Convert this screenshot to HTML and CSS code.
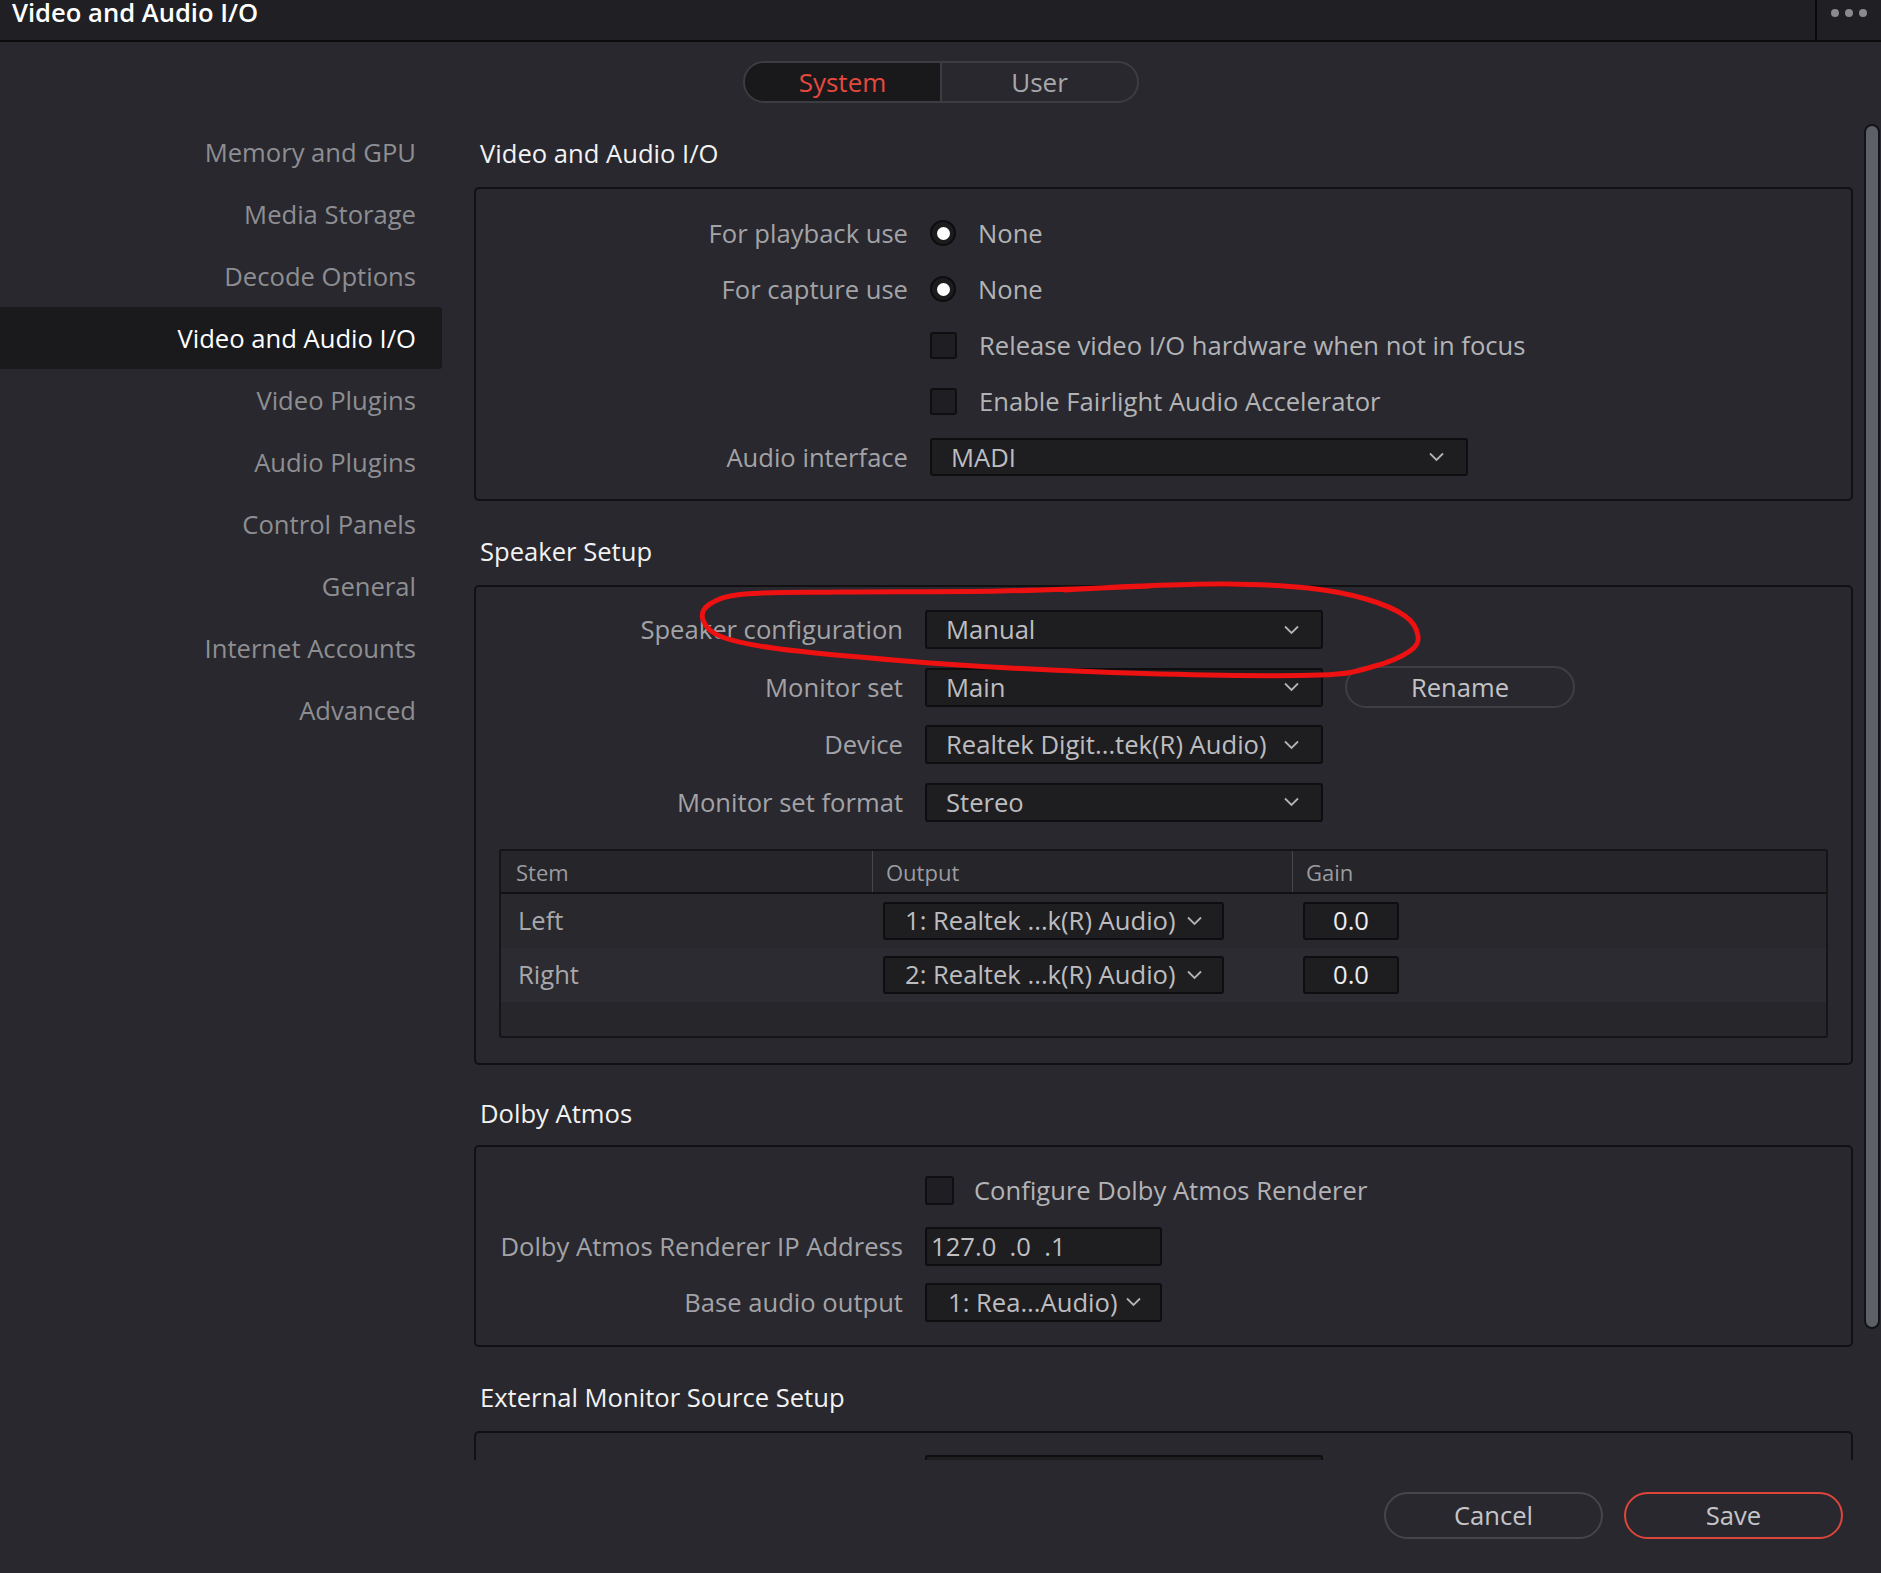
FILE: index.html
```html
<!DOCTYPE html>
<html>
<head>
<meta charset="utf-8">
<title>Video and Audio I/O</title>
<link rel="stylesheet" href="styles.css">
</head>
<body>
<header class="titlebar">
  <div class="title">Video and Audio I/O</div>
  <div class="menu"><span class="dot"></span><span class="dot"></span><span class="dot"></span></div>
</header>

<div class="seg-wrap">
  <div class="seg">
    <div class="seg-item active">System</div>
    <div class="seg-item">User</div>
  </div>
</div>

<div class="layout">
  <nav class="sidebar">
    <div class="nav-item">Memory and GPU</div>
    <div class="nav-item">Media Storage</div>
    <div class="nav-item">Decode Options</div>
    <div class="nav-item active">Video and Audio I/O</div>
    <div class="nav-item">Video Plugins</div>
    <div class="nav-item">Audio Plugins</div>
    <div class="nav-item">Control Panels</div>
    <div class="nav-item">General</div>
    <div class="nav-item">Internet Accounts</div>
    <div class="nav-item">Advanced</div>
  </nav>

  <div class="content">
    <div class="scroll">
      <div class="section-title">Video and Audio I/O</div>
      <div class="box box1">
        <div class="row">
          <div class="lbl">For playback use</div>
          <span class="radio"></span><span class="opt-text">None</span>
        </div>
        <div class="row">
          <div class="lbl">For capture use</div>
          <span class="radio"></span><span class="opt-text">None</span>
        </div>
        <div class="row">
          <div class="lbl"></div>
          <span class="check"></span><span class="opt-text">Release video I/O hardware when not in focus</span>
        </div>
        <div class="row">
          <div class="lbl"></div>
          <span class="check"></span><span class="opt-text">Enable Fairlight Audio Accelerator</span>
        </div>
        <div class="row">
          <div class="lbl">Audio interface</div>
          <div class="select sel-wide"><span>MADI</span><svg class="chev" width="15" height="10" viewBox="0 0 15 10"><polyline points="1,1.5 7.5,8 14,1.5"/></svg></div>
        </div>
      </div>

      <div class="section-title">Speaker Setup</div>
      <div class="box box2 f2">
        <div class="row r39">
          <div class="lbl">Speaker configuration</div>
          <div class="select sel-mid"><span>Manual</span><svg class="chev" width="15" height="10" viewBox="0 0 15 10"><polyline points="1,1.5 7.5,8 14,1.5"/></svg></div>
        </div>
        <div class="row r39">
          <div class="lbl">Monitor set</div>
          <div class="select sel-mid"><span>Main</span><svg class="chev" width="15" height="10" viewBox="0 0 15 10"><polyline points="1,1.5 7.5,8 14,1.5"/></svg></div>
          <div class="pill rename">Rename</div>
        </div>
        <div class="row r39">
          <div class="lbl">Device</div>
          <div class="select sel-mid"><span>Realtek Digit...tek(R) Audio)</span><svg class="chev" width="15" height="10" viewBox="0 0 15 10"><polyline points="1,1.5 7.5,8 14,1.5"/></svg></div>
        </div>
        <div class="row r39">
          <div class="lbl">Monitor set format</div>
          <div class="select sel-mid"><span>Stereo</span><svg class="chev" width="15" height="10" viewBox="0 0 15 10"><polyline points="1,1.5 7.5,8 14,1.5"/></svg></div>
        </div>

        <div class="table">
          <div class="thead">
            <div class="th">Stem</div>
            <div class="th th-div">Output</div>
            <div class="th th-div">Gain</div>
          </div>
          <div class="tr tr-a">
            <div class="td td-name">Left</div>
            <div class="td"><div class="select sel-out"><span>1: Realtek ...k(R) Audio)</span><svg class="chev" width="15" height="10" viewBox="0 0 15 10"><polyline points="1,1.5 7.5,8 14,1.5"/></svg></div></div>
            <div class="td"><div class="gain">0.0</div></div>
          </div>
          <div class="tr tr-b">
            <div class="td td-name">Right</div>
            <div class="td"><div class="select sel-out"><span>2: Realtek ...k(R) Audio)</span><svg class="chev" width="15" height="10" viewBox="0 0 15 10"><polyline points="1,1.5 7.5,8 14,1.5"/></svg></div></div>
            <div class="td"><div class="gain">0.0</div></div>
          </div>
        </div>
      </div>

      <div class="section-title">Dolby Atmos</div>
      <div class="box box3 f2">
        <div class="row r39 g17">
          <div class="lbl"></div>
          <span class="check check-b"></span><span class="opt-text opt-b">Configure Dolby Atmos Renderer</span>
        </div>
        <div class="row r39 g17">
          <div class="lbl">Dolby Atmos Renderer IP Address</div>
          <div class="ip">127.0  .0  .1</div>
        </div>
        <div class="row r39 g17">
          <div class="lbl">Base audio output</div>
          <div class="select sel-small"><span>1: Rea...Audio)</span><svg class="chev" width="15" height="10" viewBox="0 0 15 10"><polyline points="1,1.5 7.5,8 14,1.5"/></svg></div>
        </div>
      </div>

      <div class="section-title">External Monitor Source Setup</div>
      <div class="box box4 f2">
        <div class="row r39">
          <div class="lbl"></div>
          <div class="select sel-mid"></div>
        </div>
      </div>
    </div>
    <div class="scrollbar"><div class="thumb"></div></div>
  </div>
</div>

<footer class="footer">
  <div class="pill btn">Cancel</div>
  <div class="pill btn save">Save</div>
</footer>

<svg class="annotation" width="1881" height="1573" viewBox="0 0 1881 1573">
  <path d="M1150,586 C1125,587 1052,590 1000,591 C948,592 882,591.5 840,592 C797,592.5 767,592 745,594 C723,596 717,599.7 710,604 C703,608.3 701,614.5 703,620 C705,625.5 709.2,632.2 722,637 C734.8,641.8 749.5,645 780,649 C810.5,653 866.7,657.8 905,661 C943.3,664.2 967.5,665.8 1010,668 C1052.5,670.2 1108.3,672.8 1160,674 C1211.7,675.2 1284.2,676.3 1320,675 C1355.8,673.7 1360,670 1375,666 C1390,662 1402.8,656 1410,651 C1417.2,646 1418.8,641.8 1418,636 C1417.2,630.2 1413.7,622.2 1405,616 C1396.3,609.8 1382.2,603.7 1366,599 C1349.8,594.3 1331.5,590.5 1308,588 C1284.5,585.5 1253,584.3 1225,584 C1197,583.7 1166.7,585 1140,586 C1113.3,587 1077.5,589.3 1065,590"/>
</svg>
</body>
</html>
```

FILE: styles.css
```css
* { box-sizing: border-box; }

body {
  margin: 0;
  width: 1881px;
  height: 1573px;
  overflow: hidden;
  position: relative;
  background: #28282e;
  font-family: "Open Sans", "Noto Sans", sans-serif;
  font-size: 25.6px;
  color: #a4a4a8;
}

/* Title bar */
.titlebar {
  height: 42px;
  background: #1f1f24;
  border-bottom: 2px solid #0b0b0d;
  display: flex;
  justify-content: space-between;
}
.title {
  color: #ffffff;
  font-weight: 600;
  line-height: 28px;
  padding-left: 12px;
  margin-top: -1px;
}
.menu {
  width: 66px;
  border-left: 2px solid #0b0b0d;
  display: flex;
  gap: 6px;
  padding-left: 14px;
  padding-top: 9px;
}
.dot {
  width: 8px;
  height: 8px;
  border-radius: 50%;
  background: #8a8a8f;
}

/* Segmented control */
.seg-wrap {
  display: flex;
  justify-content: center;
  padding: 19px 0 18px 1px;
}
.seg {
  display: flex;
  width: 396px;
  height: 42px;
  border: 2px solid #3c3c43;
  border-radius: 21px;
  overflow: hidden;
}
.seg-item {
  flex: 1;
  display: flex;
  align-items: center;
  justify-content: center;
  color: #a8a8ac;
  font-size: 26px;
}
.seg-item.active {
  background: #19191c;
  color: #e5493d;
  border-right: 2px solid #3c3c43;
}

/* Layout */
.layout {
  display: flex;
  height: 1339px;
}
.sidebar {
  width: 442px;
  flex-shrink: 0;
}
.nav-item {
  height: 62px;
  display: flex;
  align-items: center;
  justify-content: flex-end;
  padding-right: 26px;
  color: #8e8e92;
}
.nav-item.active {
  background: #1a1a1d;
  color: #ffffff;
  border-radius: 0 3px 3px 0;
}

.content {
  flex: 1;
  display: flex;
  margin-left: 32px;
  min-width: 0;
}
.scroll {
  width: 1379px;
  flex-shrink: 0;
  overflow: hidden;
  padding-top: 13px;
}
.scrollbar {
  width: 16px;
  margin-left: 11px;
  padding-top: 3px;
}
.thumb {
  height: 1205px;
  background: #5d6167;
  border: 2px solid #141416;
  border-radius: 9px;
}

/* Sections */
.section-title {
  height: 40px;
  line-height: 40px;
  color: #f2f2f2;
  padding-left: 6px;
}
.box {
  border: 2px solid #111114;
  border-radius: 5px;
  margin-top: 13px;
  margin-bottom: 31px;
}
.box1 { padding: 25px 0 23px; }
.box2 { padding: 23px 23px 25px 0; margin-bottom: 29px; }
.box3 { padding: 24px 0 23px; margin-top: 11px; }
.box4 { padding: 22px 0 0; height: 200px; }

.row {
  display: flex;
  align-items: center;
  height: 38px;
}
.row + .row { margin-top: 18px; }
.row.r39 { height: 39px; }
.row.r39 + .row.r39 { margin-top: 18.5px; }
.row.g17 + .row.g17 { margin-top: 17px; }

.lbl {
  width: 432px;
  flex-shrink: 0;
  margin-right: 22px;
  text-align: right;
  white-space: nowrap;
  color: #a3a3a7;
}
.f2 .lbl { width: 427px; }

.radio {
  width: 26px;
  height: 26px;
  border-radius: 50%;
  background: #1c1c1f;
  border: 2px solid #0d0d0f;
  display: flex;
  align-items: center;
  justify-content: center;
  flex-shrink: 0;
}
.radio::after {
  content: "";
  width: 13px;
  height: 13px;
  border-radius: 50%;
  background: #ffffff;
}
.check {
  width: 27px;
  height: 27px;
  border-radius: 3px;
  background: #1f1f23;
  border: 2px solid #0f0f11;
  flex-shrink: 0;
}
.check-b { width: 29px; height: 29px; }
.opt-text {
  margin-left: 22px;
  color: #b3b3b6;
  white-space: nowrap;
}
.opt-b { margin-left: 20px; }

/* Selects */
.select {
  display: flex;
  align-items: center;
  justify-content: space-between;
  height: 38px;
  background: #1e1e21;
  border: 2px solid #0e0e10;
  border-radius: 3px;
  padding: 0 20px 0 19px;
  color: #bdbdc0;
  white-space: nowrap;
  flex-shrink: 0;
}
.r39 .select { height: 39px; }
.chev {
  flex-shrink: 0;
  fill: none;
  stroke: #b3b3b6;
  stroke-width: 1.8;
}
.sel-wide { width: 538px; padding-right: 22px; }
.sel-mid { width: 398px; padding-right: 22px; }
.sel-small { width: 237px; padding-left: 21px; padding-right: 19px; }
.sel-out { width: 341px; padding-left: 20px; padding-right: 20px; }

.ip {
  width: 237px;
  height: 39px;
  background: #1e1e21;
  border: 2px solid #0e0e10;
  border-radius: 3px;
  padding-left: 4px;
  display: flex;
  align-items: center;
  white-space: pre;
  color: #c0c0c3;
}

.pill {
  display: flex;
  align-items: center;
  justify-content: center;
  border: 2px solid #3e3e45;
  border-radius: 24px;
  color: #c3c3c6;
}
.rename {
  width: 230px;
  height: 42px;
  margin-left: 22px;
  flex-shrink: 0;
}

/* Table */
.table {
  margin: 27px 0 0 23px;
  height: 189px;
  border: 2px solid #151518;
  border-radius: 3px;
  background: #26262b;
}
.thead, .tr {
  display: grid;
  grid-template-columns: 371px 420px 1fr;
}
.thead {
  height: 43px;
  border-bottom: 2px solid #111113;
  background: #25252a;
}
.th {
  font-size: 22px;
  color: #9c9ca0;
  display: flex;
  align-items: center;
  padding-left: 15px;
  padding-top: 2px;
}
.th-div {
  border-left: 1px solid #46464c;
  padding-left: 13px;
}
.tr { height: 54px; }
.tr-a { background: #28282d; }
.tr-b { background: #2b2b31; }
.td {
  display: flex;
  align-items: center;
  padding-left: 11px;
}
.td-name {
  padding-left: 17px;
  color: #a8a8ac;
}
.gain {
  width: 96px;
  height: 38px;
  background: #1e1e21;
  border: 2px solid #0e0e10;
  border-radius: 3px;
  display: flex;
  align-items: center;
  justify-content: center;
  color: #ededef;
}

/* Footer */
.footer {
  display: flex;
  justify-content: flex-end;
  gap: 21px;
  padding: 32px 38px 0 0;
}
.btn {
  width: 219px;
  height: 47px;
  border-color: #45454c;
  color: #c5c5c8;
}
.btn.save { border-color: #df463b; }

/* Hand-drawn annotation overlay */
.annotation {
  position: absolute;
  left: 0;
  top: 0;
  pointer-events: none;
}
.annotation path {
  fill: none;
  stroke: #ee1111;
  stroke-width: 5;
  stroke-linecap: round;
  stroke-linejoin: round;
}
```
